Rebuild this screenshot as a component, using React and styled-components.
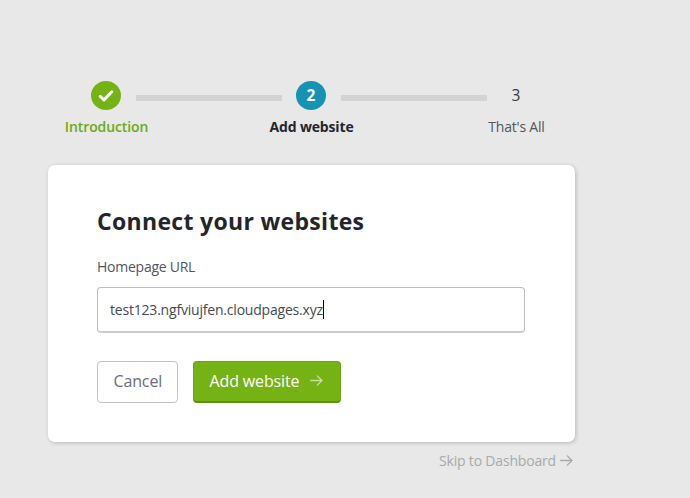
import React from "react";
import styled, { createGlobalStyle } from "styled-components";

const GlobalStyle = createGlobalStyle`
  * { box-sizing: border-box; }
  body {
    margin: 0;
    background: #e8e8e8;
    font-family: "Open Sans", "Noto Sans", sans-serif;
    color: #50565c;
    overflow: hidden;
  }
`;

const Page = styled.main`
  width: 690px;
  height: 498px;
  padding: 81px 0 0 48px;
`;

const Content = styled.div`
  width: 527px;
  display: flex;
  flex-direction: column;
`;

const Stepper = styled.ol`
  list-style: none;
  margin: 0;
  padding: 0 0 0 29px;
  height: 84px;
  display: flex;
  align-items: flex-start;
`;

const Step = styled.li`
  width: 59px;
  flex: none;
  display: flex;
  flex-direction: column;
  align-items: center;
`;

const tones = {
  done: { fill: "#75b214", label: "#6aaa14", weight: 600, spacing: "-0.12px" },
  current: { fill: "#1593b3", label: "#22262a", weight: 700, spacing: "-0.15px" },
  upcoming: { fill: "transparent", label: "#50565c", weight: 400, spacing: "-0.2px" },
};

const Marker = styled.span`
  width: 30px;
  height: 29px;
  margin-right: 1px;
  border-radius: 50%;
  display: flex;
  align-items: center;
  justify-content: center;
  background: ${({ $state }) => tones[$state].fill};
  color: ${({ $state }) => ($state === "upcoming" ? "#343a3f" : "#fff")};
  font-size: 15.5px;
  line-height: 28px;
  padding-bottom: 1px;
  font-weight: ${({ $state }) => ($state === "upcoming" ? 500 : 700)};
`;

const StepLabel = styled.span`
  margin-top: 7px;
  white-space: nowrap;
  font-size: 14px;
  line-height: 20px;
  color: ${({ $state }) => tones[$state].label};
  font-weight: ${({ $state }) => tones[$state].weight};
  letter-spacing: ${({ $state }) => tones[$state].spacing};
`;

const Connector = styled.li`
  width: 146px;
  flex: none;
  height: 6px;
  margin-top: 14px;
  background: #d3d3d3;
`;

const Card = styled.form`
  height: 277px;
  padding: 40px 49px 0;
  border-radius: 7px;
  background: #fff;
  box-shadow: 1px 1px 4px rgba(0, 0, 0, 0.2);
`;

const Title = styled.h1`
  margin: 0;
  font-size: 23px;
  line-height: 32px;
  font-weight: 700;
  letter-spacing: 0.32px;
  color: #22262a;
`;

const FieldLabel = styled.label`
  display: block;
  margin-top: 20px;
  font-size: 14px;
  line-height: 20px;
  letter-spacing: -0.25px;
`;

const Field = styled.div`
  display: flex;
  align-items: center;
  width: 428px;
  height: 46px;
  margin-top: 10px;
  padding: 0 12px;
  border: 1px solid #bdbdbd;
  border-bottom: 2px solid #cdcdcd;
  border-radius: 4px;
  font-size: 14px;
  line-height: 20px;
  letter-spacing: -0.2px;
  color: #464b50;
`;

const Caret = styled.span`
  width: 1px;
  height: 19px;
  background: #000;
`;

const Actions = styled.div`
  display: flex;
  gap: 15px;
  margin-top: 28px;
`;

const Button = styled.button`
  display: flex;
  align-items: center;
  height: 42px;
  padding: 0 0 3px 15.5px;
  border-radius: 4px;
  font-family: inherit;
  font-size: 16px;
  white-space: nowrap;
  width: ${({ $primary }) => ($primary ? 148 : 81)}px;
  color: ${({ $primary }) => ($primary ? "#fff" : "#6b7075")};
  background: ${({ $primary }) => ($primary ? "#75b214" : "#fff")};
  border: 1px solid ${({ $primary }) => ($primary ? "#6ca511" : "#c3c3c3")};
  ${({ $primary }) => $primary && "border-bottom: 2px solid #5d910d; padding-bottom: 2px;"}
  letter-spacing: -0.14px;
`;

const SkipLink = styled.a`
  align-self: flex-end;
  display: flex;
  align-items: center;
  gap: 4px;
  margin: 9px 1px 0 0;
  font-size: 14px;
  line-height: 20px;
  letter-spacing: -0.18px;
  color: #a6aaae;
`;

const ArrowIcon = styled.svg`
  flex: none;
  width: 14px;
  height: 12px;
  fill: none;
  stroke: currentColor;
  stroke-width: 1.3;
  stroke-linecap: round;
  stroke-linejoin: round;
  margin-left: ${({ $offset }) => $offset || 0}px;
  opacity: ${({ $faded }) => ($faded ? 0.6 : 1)};
`;

const CheckIcon = styled.svg`
  width: 16px;
  height: 13px;
  fill: none;
  stroke: #fff;
  stroke-width: 3;
  stroke-linecap: round;
  stroke-linejoin: round;
`;

const Arrow = (props) => (
  <ArrowIcon viewBox="0 0 14 12" aria-hidden="true" {...props}>
    <path d="M.7 5.5H12M7.3 .9 12 5.5 7.3 10.1" />
  </ArrowIcon>
);

const steps = [
  { label: "Introduction", state: "done" },
  { label: "Add website", state: "current" },
  { label: "That's All", state: "upcoming" },
];

export default function App() {
  return (
    <Page>
      <GlobalStyle />
      <Content>
        <Stepper>
          {steps.map(({ label, state }, i) => (
            <React.Fragment key={label}>
              {i > 0 && <Connector aria-hidden="true" />}
              <Step>
                <Marker $state={state}>
                  {state === "done" ? (
                    <CheckIcon viewBox="0 0 16 13">
                      <path d="M2.2 7.4 6 10.9 13.8 2.8" />
                    </CheckIcon>
                  ) : (
                    i + 1
                  )}
                </Marker>
                <StepLabel $state={state}>{label}</StepLabel>
              </Step>
            </React.Fragment>
          ))}
        </Stepper>
        <Card>
          <Title>Connect your websites</Title>
          <FieldLabel>Homepage URL</FieldLabel>
          <Field>
            test123.ngfviujfen.cloudpages.xyz
            <Caret />
          </Field>
          <Actions>
            <Button type="button">Cancel</Button>
            <Button type="button" $primary>
              Add website
              <Arrow $offset={11} $faded />
            </Button>
          </Actions>
        </Card>
        <SkipLink>
          Skip to Dashboard
          <Arrow />
        </SkipLink>
      </Content>
    </Page>
  );
}
